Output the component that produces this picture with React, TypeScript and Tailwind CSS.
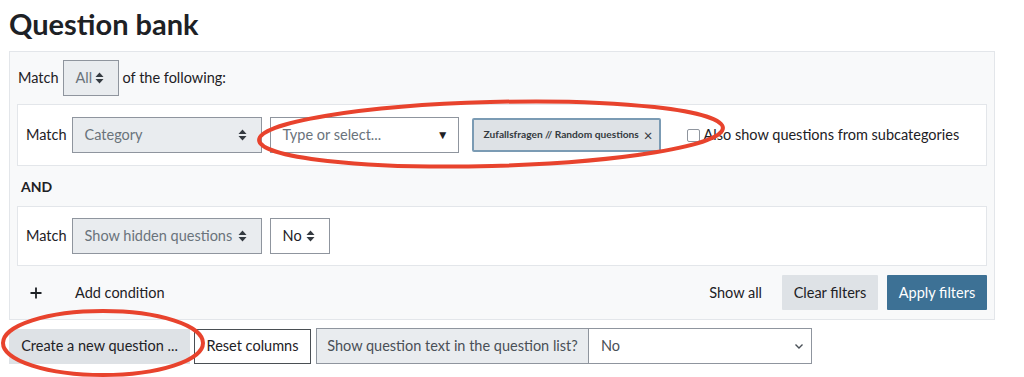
import React from 'react';

const font = { fontFamily: 'Lato, "Noto Sans", sans-serif' };

// up/down caret used by Moodle custom selects
const UpDown = () => (
    <svg width="9" height="12" viewBox="0 0 9 12" className="shrink-0">
        <path d="M4.5 0.5 L8.5 5 L0.5 5 Z" fill="#343a40" />
        <path d="M4.5 11.5 L8.5 7 L0.5 7 Z" fill="#343a40" />
    </svg>
);

const Chevron = () => (
    <svg width="10" height="7" viewBox="0 0 10 7" className="shrink-0">
        <path d="M1.5 1.5 L5 5 L8.5 1.5" stroke="#495057" strokeWidth="1.4" fill="none" />
    </svg>
);

interface SelectProps {
    label: string;
    width: string;
    disabled?: boolean;
}

const FakeSelect = ({ label, width, disabled = false }: SelectProps) => (
    <div
        className={`${width} h-[36px] flex items-center justify-between pl-[12px] pr-[14px] border border-[#8f959e] text-[14.5px] ${
            disabled ? 'bg-[#e9ecef] text-[#6a737b]' : 'bg-white text-[#1d2125]'
        }`}
    >
        <span className="whitespace-nowrap">{label}</span>
        <UpDown />
    </div>
);

export default function App() {
    return (
        <div className="relative w-[1024px] h-[377px] overflow-hidden bg-white text-[#1d2125] px-[9px]" style={font}>
            <h2 className="text-[29px] font-bold leading-[36px] pt-[6px] mb-[9px]">Question bank</h2>

            {/* filter panel */}
            <div className="w-[986px] border border-[#e3e6ea] bg-[#f8f9fa] px-[7px] pt-[8px] pb-[9px] text-[14.5px]">
                <div className="flex items-center pl-[1px]">
                    <span>Match</span>
                    <div className="ml-[4px] mr-[4px]">
                        <FakeSelect label="All" width="w-[56px]" disabled />
                    </div>
                    <span>of the following:</span>
                </div>

                <div className="mt-[8px] bg-white border border-[#e3e6ea] h-[62px] flex items-center pl-[8px]">
                    <span className="mr-[5px]">Match</span>
                    <FakeSelect label="Category" width="w-[190px]" disabled />
                    <div className="ml-[8px] w-[189px] h-[36px] bg-white border border-[#8f959e] flex items-center justify-between pl-[12px] pr-[9px] text-[#6a737b]">
                        <span>Type or select...</span>
                        <span className="text-[#1d2125] text-[12px]">▼</span>
                    </div>
                    <div className="ml-[13px] w-[189px] h-[34px] bg-[#dee2e6] border-2 border-[#7b9bb4] rounded-[2px] flex items-center justify-between pl-[10px] pr-[6px]">
                        <span className="text-[10.2px] font-bold text-[#343a40] whitespace-nowrap">Zufallsfragen // Random questions</span>
                        <span className="text-[15px] leading-none text-[#343a40]">×</span>
                    </div>
                    <div className="ml-[26px] w-[13px] h-[13px] border border-[#8f959e] rounded-[2px] bg-white" />
                    <span className="ml-[4px] whitespace-nowrap">Also show questions from subcategories</span>
                </div>

                <div className="h-[40px] flex items-center pl-[4px] text-[14px] font-bold">AND</div>

                <div className="bg-white border border-[#e3e6ea] h-[60px] flex items-center pl-[8px]">
                    <span className="mr-[5px]">Match</span>
                    <FakeSelect label="Show hidden questions" width="w-[190px]" disabled />
                    <div className="ml-[8px]">
                        <FakeSelect label="No" width="w-[60px]" />
                    </div>
                </div>

                <div className="mt-[9px] flex items-center">
                    <span className="ml-[13px] w-[12px] flex justify-center">
                        <svg width="12" height="12" viewBox="0 0 12 12">
                            <path d="M6 0.5 V11.5 M0.5 6 H11.5" stroke="#1d2125" strokeWidth="1.8" />
                        </svg>
                    </span>
                    <span className="ml-[33px]">Add condition</span>
                    <span className="ml-auto mr-[20px]">Show all</span>
                    <div className="w-[96px] h-[35px] bg-[#dee2e6] flex items-center justify-center rounded-[1px]">Clear filters</div>
                    <div className="ml-[9px] w-[100px] h-[35px] bg-[#3d7195] text-white flex items-center justify-center rounded-[1px]">Apply filters</div>
                </div>
            </div>

            {/* actions under the panel */}
            <div className="mt-[8px] flex items-center text-[14.5px]">
                <div className="w-[181px] h-[35px] bg-[#dee2e6] flex items-center justify-center">Create a new question ...</div>
                <div className="ml-[4px] w-[117px] h-[35px] bg-white border border-[#4a4f54] flex items-center justify-center">Reset columns</div>
                <div className="ml-[5px] flex h-[36px]">
                    <div className="w-[273px] bg-[#e9ecef] border border-[#8f959e] flex items-center justify-center text-[#495057]">
                        Show question text in the question list?
                    </div>
                    <div className="w-[223px] bg-white border border-l-0 border-[#8f959e] flex items-center justify-between pl-[12px] pr-[7px] text-[#495057]">
                        <span>No</span>
                        <Chevron />
                    </div>
                </div>
            </div>

            {/* red annotation ellipses drawn over the screenshot */}
            <svg className="absolute inset-0 pointer-events-none" width="1024" height="377">
                <ellipse cx="491" cy="134" rx="232" ry="32" fill="none" stroke="#e8432d" strokeWidth="4" transform="rotate(-1.5 491 134)" />
                <ellipse cx="103" cy="343" rx="100" ry="32" fill="none" stroke="#e8432d" strokeWidth="4" />
            </svg>
        </div>
    );
}
